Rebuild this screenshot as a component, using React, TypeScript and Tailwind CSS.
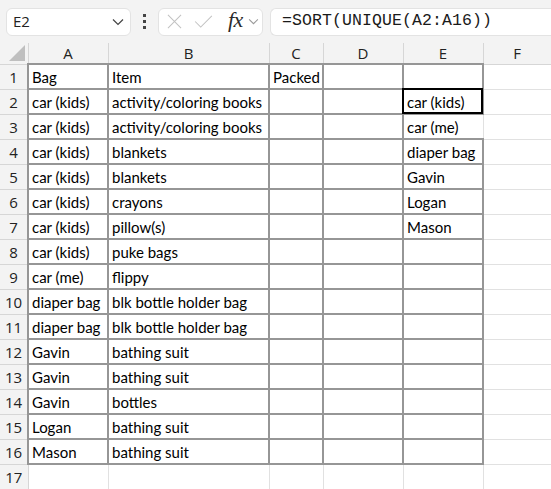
import React from 'react';

const cols = [28, 80, 161, 54, 80, 80, 68];
const letters = ['A', 'B', 'C', 'D', 'E', 'F'];

const data: string[][] = [
    ['Bag', 'Item', 'Packed', '', ''],
    ['car (kids)', 'activity/coloring books', '', '', 'car (kids)'],
    ['car (kids)', 'activity/coloring books', '', '', 'car (me)'],
    ['car (kids)', 'blankets', '', '', 'diaper bag'],
    ['car (kids)', 'blankets', '', '', 'Gavin'],
    ['car (kids)', 'crayons', '', '', 'Logan'],
    ['car (kids)', 'pillow(s)', '', '', 'Mason'],
    ['car (kids)', 'puke bags', '', '', ''],
    ['car (me)', 'flippy', '', '', ''],
    ['diaper bag', 'blk bottle holder bag', '', '', ''],
    ['diaper bag', 'blk bottle holder bag', '', '', ''],
    ['Gavin', 'bathing suit', '', '', ''],
    ['Gavin', 'bathing suit', '', '', ''],
    ['Gavin', 'bottles', '', '', ''],
    ['Logan', 'bathing suit', '', '', ''],
    ['Mason', 'bathing suit', '', '', ''],
];

const Chevron = ({ className }: { className: string }) => (
    <svg viewBox="0 0 12 8" className={className} fill="none" stroke="currentColor" strokeWidth="1.2">
        <path d="M1 1.5 L6 6.5 L11 1.5" />
    </svg>
);

const FormulaBar = () => (
    <div className="h-[43px] bg-[#f3f3f3] flex items-center pl-[6px]">
        <div className="w-[125px] h-[28px] bg-white border border-[#e3e3e3] rounded-[6px] flex items-center justify-between pl-[6px] pr-[6px]">
            <span className="text-[15px] text-[#222]" style={{ fontFamily: '"Open Sans", sans-serif' }}>E2</span>
            <Chevron className="w-[12px] h-[8px] text-[#444]" />
        </div>
        <div className="w-[27px] flex flex-col items-center gap-[3px]">
            <div className="w-[3px] h-[3px] bg-[#444]" />
            <div className="w-[3px] h-[3px] bg-[#444]" />
            <div className="w-[3px] h-[3px] bg-[#444]" />
        </div>
        <div className="w-[105px] h-[28px] bg-white border border-[#e3e3e3] rounded-[6px] flex items-center pl-[8px]">
            <svg viewBox="0 0 16 16" className="w-[15px] h-[15px] text-[#c2c2c2]" fill="none" stroke="currentColor" strokeWidth="1.1">
                <path d="M1 1 L15 15 M15 1 L1 15" />
            </svg>
            <svg viewBox="0 0 20 14" className="w-[19px] h-[13px] ml-[12px] text-[#c2c2c2]" fill="none" stroke="currentColor" strokeWidth="1.1">
                <path d="M1 7 L7 13 L19 1" />
            </svg>
            <span className="ml-[15px] text-[22px] italic text-[#2a2a2a] leading-none -mt-[3px] tracking-[-0.5px]" style={{ fontFamily: '"Liberation Serif", serif' }}>fx</span>
            <Chevron className="w-[11px] h-[7px] ml-[5px] text-[#999]" />
        </div>
        <div className="flex-1 ml-[7px] h-[28px] bg-white border border-[#e3e3e3] rounded-l-[6px] border-r-0 flex items-center pl-[11px]">
            <span className="text-[16.5px] text-[#1a1a1a] tracking-[0.1px]" style={{ fontFamily: '"Liberation Mono", monospace' }}>=SORT(UNIQUE(A2:A16))</span>
        </div>
    </div>
);

export default function App() {
    const cellBorder = (r: number, c: number) => {
        if (c > 4 || r > 15) return 'border border-[#e1e1e1]';
        if (r === 2 && c === 4) return 'border-2 border-[#969696] border-r-[#e1e1e1] border-r-[1px]';
        return 'border-2 border-[#969696]';
    };

    return (
        <div className="w-[551px] h-[489px] overflow-hidden bg-white">
            <FormulaBar />
            <table className="border-collapse table-fixed w-[551px]" style={{ fontFamily: 'Lato, sans-serif' }}>
                <colgroup>
                    {cols.map((w, i) => <col key={i} style={{ width: w }} />)}
                </colgroup>
                <thead>
                    <tr className="h-[21px] bg-[#f3f3f3]">
                        <th className="p-0 border-r border-b border-[#d6d6d6] relative">
                            <svg viewBox="0 0 16 16" className="w-[16px] h-[16px] absolute right-[3px] bottom-[3px]">
                                <path d="M16 0 L16 16 L0 16 Z" fill="#bfbfbf" />
                            </svg>
                        </th>
                        {letters.map(l => (
                            <th key={l} className="p-0 border-r border-b border-[#d6d6d6] text-[15px] leading-[20px] font-normal text-[#222] text-center" style={{ fontFamily: '"Open Sans", sans-serif' }}>
                                {l}
                            </th>
                        ))}
                    </tr>
                </thead>
                <tbody>
                    {Array.from({ length: 17 }).map((_, r) => (
                        <tr key={r} className="h-[25px]">
                            <td className="p-0 bg-[#f3f3f3] border-r border-b border-[#d6d6d6] text-[15px] leading-[20px] text-[#222] text-center" style={{ fontFamily: '"Open Sans", sans-serif' }}>
                                {r + 1}
                            </td>
                            {letters.map((_, c) => {
                                const text = data[r]?.[c] ?? '';
                                const sel = r === 1 && c === 4;
                                return (
                                    <td
                                        key={c}
                                        className={'p-0 pl-[3px] text-[15px] leading-[20px] text-black whitespace-nowrap overflow-visible relative ' + cellBorder(r, c)}
                                    >
                                        {text}
                                        {sel && <div className="absolute z-10 -left-[2px] -top-[2px] -right-[1px] -bottom-[1px] border-2 border-black" />}
                                    </td>
                                );
                            })}
                        </tr>
                    ))}
                </tbody>
            </table>
        </div>
    );
}
